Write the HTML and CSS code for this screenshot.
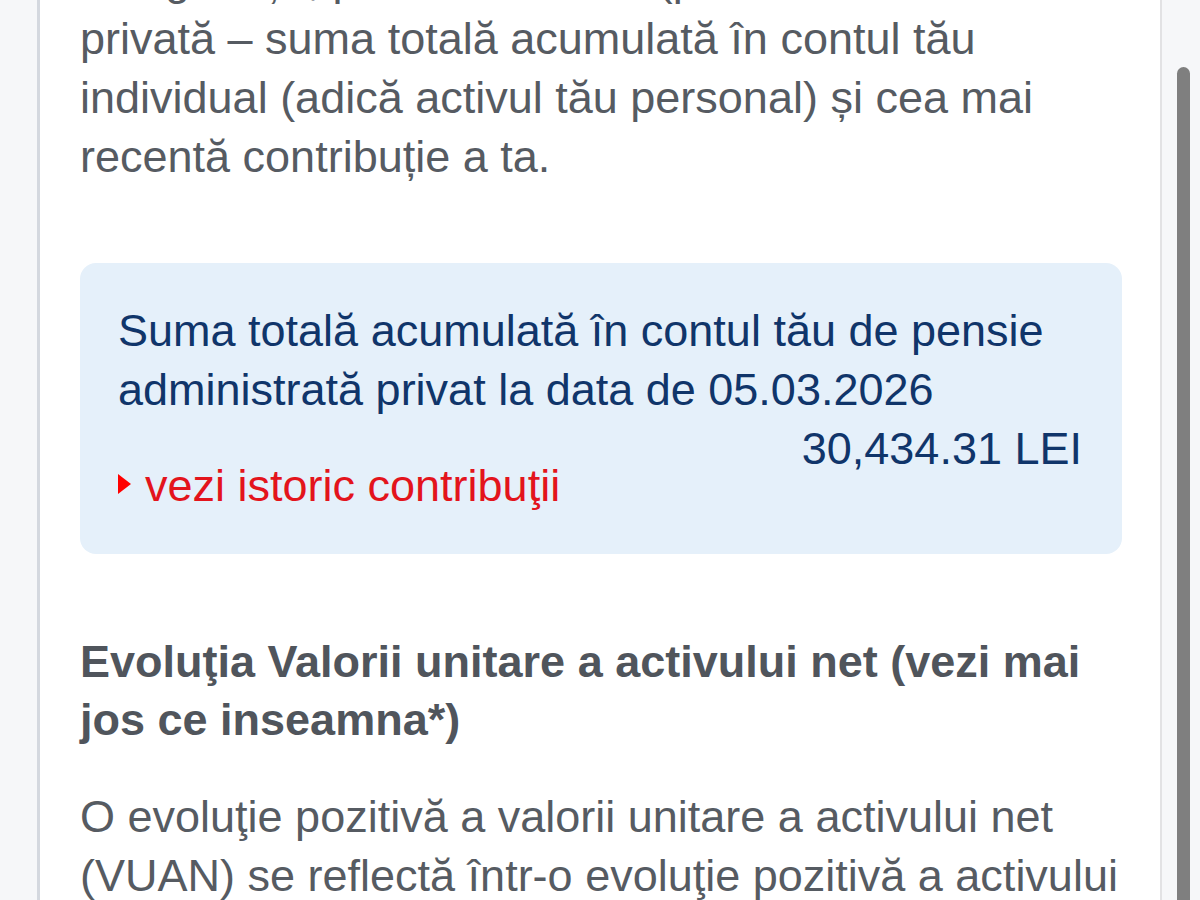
FILE: index.html
```html
<!DOCTYPE html>
<html lang="ro">
<head>
  <meta charset="UTF-8" />
  <meta name="viewport" content="width=device-width, initial-scale=1.0" />
  <title>Pensia mea</title>
  <link rel="stylesheet" href="styles.css">
</head>
<body>
  <div class="screen">
    <div class="gutter-left"></div>
    <main class="card">
      <p class="intro">Aici găsești, pentru Pilonul II (pensia administrată privată – suma totală acumulată în contul tău individual (adică activul tău personal) și cea mai recentă contribuție a ta.</p>

      <section class="balance">
        <div class="balance-label">Suma totală acumulată în contul tău de pensie administrată privat la data de 05.03.2026</div>
        <div class="balance-amount">30,434.31 LEI</div>
        <a href="#" class="history-link"><span class="arrow"></span>vezi istoric contribuţii</a>
      </section>

      <h2>Evoluţia Valorii unitare a activului net (vezi mai jos ce inseamna*)</h2>
      <p class="text">O evoluţie pozitivă a valorii unitare a activului net (VUAN) se reflectă într-o evoluţie pozitivă a activului personal al fiecărui participant la fond.</p>
    </main>
    <div class="gutter-right">
      <div class="thumb"></div>
    </div>
  </div>
</body>
</html>
```

FILE: styles.css
```css
:root {
  --gutter-bg: #f6f7f9;
  --text-color: #565b62;
  --navy: #10356a;
  --red: #e3141c;
  --box-bg: #e5f0fa;
}
html, body {
  margin: 0;
  height: 900px;
  overflow: hidden;
}
body {
  background: var(--gutter-bg);
  font-family: "Liberation Sans", Arial, sans-serif;
  font-size: 45px;
  line-height: 59px;
  color: var(--text-color);
}
.screen {
  display: flex;
  height: 900px;
}
.gutter-left {
  width: 37px;
  flex: 0 0 37px;
}
.card {
  flex: 0 0 1125px;
  box-sizing: border-box;
  background: #fff;
  border-left: 3px solid #d4d8df;
  border-right: 2px solid #e2e2e4;
  padding: 0 34px 0 40px;
}
.intro {
  margin: -50px 0 0;
}
.balance {
  margin: 77px 4px 0 0;
  padding: 38px 40px 39px 38px;
  background: var(--box-bg);
  border-radius: 16px;
  color: var(--navy);
}
.balance-amount {
  text-align: right;
}
.history-link {
  display: block;
  margin-top: -22px;
  color: var(--red);
  text-decoration: none;
}
.arrow {
  display: inline-block;
  width: 0;
  height: 0;
  border-top: 10px solid transparent;
  border-bottom: 10px solid transparent;
  border-left: 13px solid #f00;
  margin-right: 14px;
  vertical-align: 7px;
}
h2 {
  margin: 79px 0 0;
  font-size: 45px;
  line-height: 58px;
  font-weight: bold;
  color: #50555c;
}
.text {
  margin: 38px 0 0;
}
.gutter-right {
  flex: 1;
  display: flex;
  flex-direction: column;
}
.thumb {
  flex: 1;
  width: 13px;
  margin: 67px 0 0 15px;
  background: #7f7f7f;
  border-radius: 7px 7px 0 0;
}
```
